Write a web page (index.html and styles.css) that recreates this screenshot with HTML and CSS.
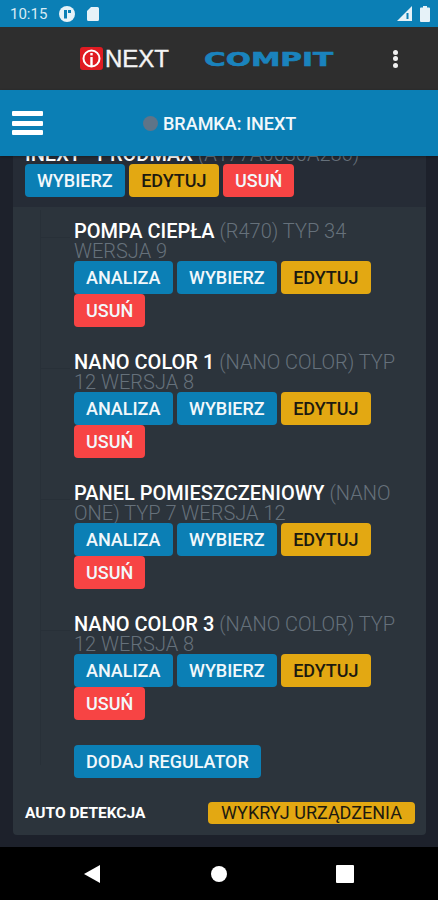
FILE: index.html
```html
<!DOCTYPE html>
<html lang="en">
<head>
  <meta charset="UTF-8">
  <meta name="viewport" content="width=device-width, initial-scale=1.0">
  <title>Bramka iNext</title>
  <link rel="stylesheet" href="styles.css">
</head>
<body>
  <div class="status-bar">
    <span class="status-time">10:15</span>
    <svg class="status-icon" width="16" height="16" viewBox="0 0 16 16"><circle cx="8" cy="8" r="8" fill="#e6f2f8"/><rect x="5" y="4" width="3" height="8.500" fill="#0b7fb5"/><rect x="9" y="4" width="3" height="3" fill="#0b7fb5"/></svg>
    <svg class="status-icon" width="12" height="14" viewBox="0 0 12 14"><path d="M4 0h6.500a1.500 1.500 0 0 1 1.500 1.500v11a1.500 1.500 0 0 1-1.500 1.500h-9A1.500 1.500 0 0 1 0 12.500V4z" fill="#e6f2f8"/></svg>
    <span class="status-spacer"></span>
    <svg class="status-icon" width="15" height="15" viewBox="0 0 15 15"><path d="M15 0v15H0z" fill="#e6f2f8"/><rect x="9.500" y="7" width="2" height="6" fill="#0b7fb5"/></svg>
    <svg class="status-icon" width="10" height="16" viewBox="0 0 10 16"><path d="M3 0h4v1.500h2a1 1 0 0 1 1 1V15a1 1 0 0 1-1 1H1a1 1 0 0 1-1-1V2.500a1 1 0 0 1 1-1h2z" fill="#e6f2f8"/></svg>
  </div>

  <header class="logo-bar">
    <svg class="inext-mark" width="23" height="23" viewBox="0 0 23 23"><rect width="23" height="23" rx="3" fill="#e01b22"/><circle cx="11.500" cy="11.500" r="8" fill="none" stroke="#fff" stroke-width="2"/><rect x="10.300" y="10" width="2.400" height="9" fill="#fff"/><rect x="10.300" y="6" width="2.400" height="2.400" fill="#fff"/></svg>
    <span class="inext-name">NEXT</span>
    <span class="compit-name">COMPIT</span>
    <div class="kebab"><i></i><i></i><i></i></div>
  </header>

  <div class="title-bar">
    <div class="burger"><i></i><i></i><i></i></div>
    <div class="gate-title"><span class="gate-dot"></span>BRAMKA: INEXT</div>
  </div>

  <main class="content">
    <section class="card">
      <div class="gateway">
        <div class="item-title"><b>INEXT - PRODMAX</b> (A177A0030A286)</div>
        <div class="buttons">
          <button class="btn blue">WYBIERZ</button>
          <button class="btn yellow">EDYTUJ</button>
          <button class="btn red">USUŃ</button>
        </div>
      </div>

      <div class="tree">
        <div class="device">
          <div class="item-title"><b>POMPA CIEPŁA</b> (R470) TYP 34 WERSJA 9</div>
          <div class="buttons">
            <button class="btn blue">ANALIZA</button>
            <button class="btn blue">WYBIERZ</button>
            <button class="btn yellow">EDYTUJ</button>
            <button class="btn red">USUŃ</button>
          </div>
        </div>
        <div class="device">
          <div class="item-title"><b>NANO COLOR 1</b> (NANO COLOR) TYP 12 WERSJA 8</div>
          <div class="buttons">
            <button class="btn blue">ANALIZA</button>
            <button class="btn blue">WYBIERZ</button>
            <button class="btn yellow">EDYTUJ</button>
            <button class="btn red">USUŃ</button>
          </div>
        </div>
        <div class="device">
          <div class="item-title"><b>PANEL POMIESZCZENIOWY</b> (NANO ONE) TYP 7 WERSJA 12</div>
          <div class="buttons">
            <button class="btn blue">ANALIZA</button>
            <button class="btn blue">WYBIERZ</button>
            <button class="btn yellow">EDYTUJ</button>
            <button class="btn red">USUŃ</button>
          </div>
        </div>
        <div class="device">
          <div class="item-title"><b>NANO COLOR 3</b> (NANO COLOR) TYP 12 WERSJA 8</div>
          <div class="buttons">
            <button class="btn blue">ANALIZA</button>
            <button class="btn blue">WYBIERZ</button>
            <button class="btn yellow">EDYTUJ</button>
            <button class="btn red">USUŃ</button>
          </div>
        </div>
        <button class="btn blue">DODAJ REGULATOR</button>
      </div>

      <div class="detect">
        <span class="detect-label">AUTO DETEKCJA</span>
        <button class="btn-small">WYKRYJ URZĄDZENIA</button>
      </div>
    </section>
  </main>

  <nav class="nav-bar">
    <svg width="18" height="20" viewBox="0 0 18 20"><path d="M17 1v18L1 10z" fill="#fff"/></svg>
    <svg width="18" height="18" viewBox="0 0 18 18"><circle cx="9" cy="9" r="8" fill="#fff"/></svg>
    <svg width="18" height="18" viewBox="0 0 18 18"><rect width="18" height="18" rx="1" fill="#fff"/></svg>
  </nav>
</body>
</html>
```

FILE: styles.css
```css
* {
  margin: 0;
  padding: 0;
  box-sizing: border-box;
}

html, body {
  height: 100%;
}

body {
  font-family: Roboto, 'Liberation Sans', sans-serif;
  background: #1d212b;
  display: flex;
  flex-direction: column;
  overflow: hidden;
}

.status-bar {
  height: 27px;
  background: #0b7fb5;
  display: flex;
  align-items: center;
  gap: 12px;
  padding: 0 8px 0 10px;
  flex-shrink: 0;
}

.status-time {
  color: #d8ebf4;
  font-size: 15px;
}

.status-spacer {
  flex: 1;
}

.status-bar .status-icon:last-child {
  margin-left: -4px;
}

.logo-bar {
  height: 63px;
  background: #2e2e2e;
  display: flex;
  align-items: center;
  padding: 0 40px 0 80px;
  flex-shrink: 0;
}

.inext-name {
  color: #f4f4f4;
  font-family: 'Liberation Sans', sans-serif;
  font-size: 24px;
  -webkit-text-stroke: 0.4px #f4f4f4;
  margin-left: 2px;
}

.compit-name {
  color: #1a83bd;
  font-family: 'DejaVu Sans', sans-serif;
  font-weight: 700;
  font-size: 20px;
  -webkit-text-stroke: 0.6px #1a83bd;
  margin-left: 35px;
  transform: scaleX(1.48);
  transform-origin: left center;
}

.kebab {
  display: flex;
  flex-direction: column;
  gap: 1.500px;
  margin-left: auto;
}

.kebab i {
  width: 5px;
  height: 5px;
  border-radius: 50%;
  background: #f0f0f0;
}

.title-bar {
  height: 66px;
  background: #0b7fb5;
  display: flex;
  align-items: center;
  padding-left: 12px;
  flex-shrink: 0;
  position: relative;
  z-index: 2;
  box-shadow: 0 1px 3px rgba(0, 0, 0, 0.3);
}

.burger {
  display: flex;
  flex-direction: column;
  gap: 4.500px;
  width: 31px;
}

.burger i {
  height: 5px;
  background: #fff;
  border-radius: 1px;
}

.gate-title {
  display: flex;
  align-items: center;
  color: #f2f8fb;
  font-size: 18px;
  font-weight: 500;
  margin-left: 100px;
}

.gate-dot {
  width: 15px;
  height: 15px;
  border-radius: 50%;
  background: #5f7488;
  margin-right: 5px;
}

.content {
  flex: 1;
  min-height: 0;
  overflow: hidden;
  padding: 0 12px 0 13px;
}

.card {
  background: #2c343c;
  border-radius: 0 0 4px 4px;
  margin-top: -12px;
}

.gateway {
  background: #262c36;
  padding: 0 12px 10px;
  height: 63px;
}

.item-title {
  color: #66717b;
  font-size: 20px;
  font-weight: 300;
  line-height: 20px;
  padding-right: 12px;
}

.item-title b {
  color: #fff;
  font-weight: 500;
}

.buttons {
  display: flex;
  flex-wrap: wrap;
  gap: 0 4.500px;
}

.btn {
  height: 33px;
  padding: 0 12px;
  border: none;
  border-radius: 4px;
  font-family: inherit;
  font-size: 18px;
  font-weight: 500;
  color: #f2f8fb;
}

.blue {
  background: #0b7fb5;
}

.yellow {
  background: #e3a812;
  color: #1d1a10;
}

.red {
  background: #f74444;
}

.tree {
  padding: 14px 0 0 61px;
  height: 583px;
  background-image: linear-gradient(#283038, #283038);
  background-size: 1px 555px;
  background-position: 27px 3px;
  background-repeat: no-repeat;
}

.device {
  height: 131px;
  position: relative;
}

.device::before {
  content: "";
  position: absolute;
  left: -34px;
  top: 16px;
  width: 30px;
  height: 1px;
  background: #283038;
}

.detect {
  height: 45px;
  display: flex;
  align-items: center;
  justify-content: space-between;
  padding: 0 11px 0 12px;
}

.detect-label {
  color: #fff;
  font-size: 15.500px;
  font-weight: 700;
}

.btn-small {
  width: 207px;
  height: 22px;
  border: none;
  border-radius: 4px;
  background: #e3a812;
  color: #1d1a10;
  font-family: inherit;
  font-size: 18px;
  font-weight: 400;
}

.nav-bar {
  height: 53px;
  background: #000;
  display: flex;
  align-items: center;
  flex-shrink: 0;
  padding-left: 83px;
  gap: 108.500px;
}
```
